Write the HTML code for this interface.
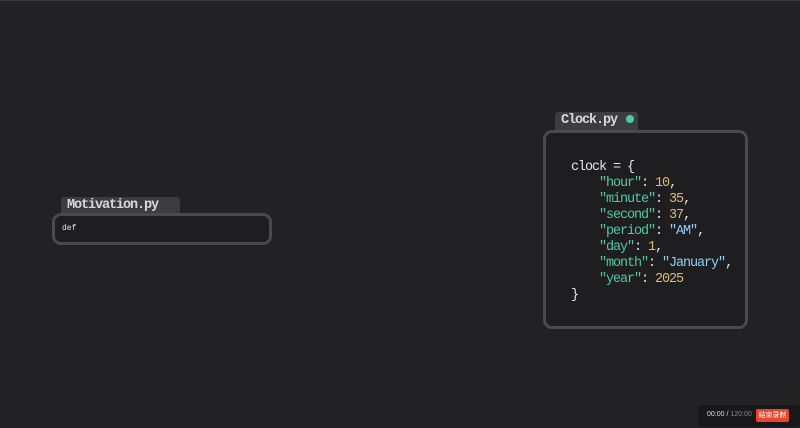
<!DOCTYPE html>
<html><head><meta charset="utf-8"><style>
body{margin:0;width:800px;height:428px;background:#222124;position:relative;overflow:hidden;font-family:"Liberation Mono",monospace;border-top:1px solid #3a3a3c;box-sizing:border-box}
.tab{position:absolute;background:#3d3d40;color:#d8d8d8;font-weight:bold;font-size:13.5px;letter-spacing:-1.1px;line-height:18px;padding-left:6px;box-sizing:border-box;border-radius:3px 3px 0 0;white-space:nowrap}
.box{position:absolute;border:3px solid #4a4a4d;border-radius:9px;background:#1e1d20;box-sizing:border-box}
.code{position:absolute;left:571px;top:159px;font-size:13.5px;line-height:16px;color:#e6e6e6;white-space:pre;letter-spacing:-1.1px}
.k{color:#4ec9a4}.n{color:#e2b96f}.s{color:#8fd0f2}
</style></head><body>
<div class="tab" style="left:555px;top:111px;width:83px;height:19px">Clock.py <span style="display:inline-block;width:8px;height:8px;border-radius:50%;background:#4ec9a4;vertical-align:0px;margin-left:2px"></span></div>
<div class="box" style="left:543px;top:129px;width:205px;height:199px"></div>
<div class="code">clock = {
    <span class="k">"hour"</span>: <span class="n">10</span>,
    <span class="k">"minute"</span>: <span class="n">35</span>,
    <span class="k">"second"</span>: <span class="n">37</span>,
    <span class="k">"period"</span>: <span class="s">"AM"</span>,
    <span class="k">"day"</span>: <span class="n">1</span>,
    <span class="k">"month"</span>: <span class="s">"January"</span>,
    <span class="k">"year"</span>: <span class="n">2025</span>
}</div>
<div class="tab" style="left:61px;top:196px;width:119px;height:17px;line-height:17px">Motivation.py</div>
<div class="box" style="left:52px;top:212px;width:220px;height:32px"></div>
<div style="position:absolute;left:62px;top:223px;font-size:8px;color:#e6e6e6;font-family:'Liberation Mono',monospace">def</div>
<div style="position:absolute;left:698px;top:404px;width:102px;height:22px;background:#19191b;border-radius:3px"></div>
<div style="position:absolute;left:707px;top:410px;font-size:7px;font-family:'Liberation Sans',sans-serif;color:#ddd">00:00 / <span style="color:#888">120:00</span></div>
<div style="position:absolute;left:756px;top:408px;width:33px;height:13px;background:#e8452c;border-radius:2px;color:#fff;font-size:7px;line-height:13px;text-align:center;font-family:'Liberation Sans','Noto Sans CJK SC',sans-serif">结束录制</div>
</body></html>
